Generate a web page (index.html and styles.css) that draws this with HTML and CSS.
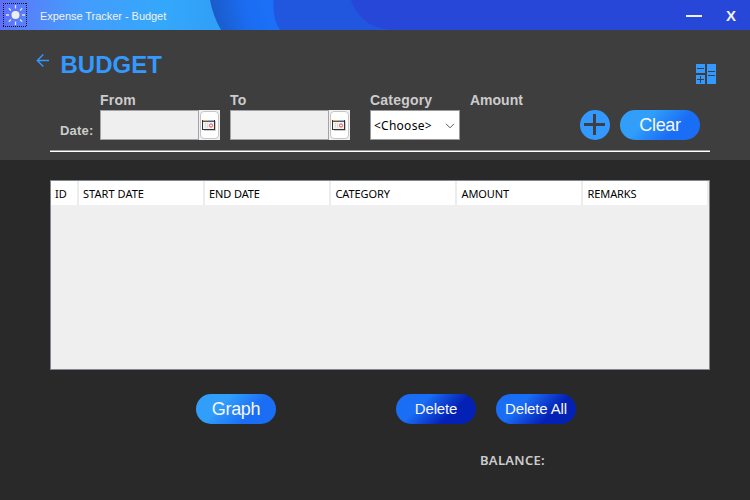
FILE: index.html
```html
<!DOCTYPE html>
<html lang="en">
<head>
<meta charset="utf-8">
<title>Expense Tracker - Budget</title>
<link rel="stylesheet" href="styles.css">
</head>
<body>
<div class="window">
  <header class="titlebar">
    <svg class="titlebar-art" width="750" height="30" viewBox="0 0 750 30" aria-hidden="true">
      <defs>
        <linearGradient id="sky" x1="0" x2="230" y1="0" y2="30" gradientUnits="userSpaceOnUse">
          <stop offset="0" stop-color="#5e6ef8"/><stop offset=".13" stop-color="#5583fa"/><stop offset=".35" stop-color="#449cfc"/><stop offset=".7" stop-color="#34a8fb"/><stop offset="1" stop-color="#2f9df6"/>
        </linearGradient>
        <linearGradient id="wave" x1="212" x2="265" y1="12" y2="0" gradientUnits="userSpaceOnUse">
          <stop offset="0" stop-color="#1a5bc8"/><stop offset=".6" stop-color="#1b6cf0"/><stop offset="1" stop-color="#1b70f7"/>
        </linearGradient>
      </defs>
      <rect width="750" height="30" fill="url(#sky)"/>
      <path d="M210 0Q213 16 221 30H750V0Z" fill="url(#wave)"/>
      <path d="M273.500 0Q272.500 20 280 30H750V0Z" fill="#2156df"/>
      <path d="M351 0Q361 28 392 30H750V0Z" fill="#2747d8"/>
    </svg>
    <svg class="app-icon" width="24" height="24" viewBox="0 0 24 24">
      <path d="M0 .5H24M0 23.500H24M.5 0V24M23.500 0V24" fill="none" stroke="#0c1020" stroke-dasharray="1 1"/>
      <circle cx="12.500" cy="12" r="4" fill="#eee"/>
      <path d="M12.500 2V5.500M12.500 18.500V22M3 12H6M19 12H22M5.800 5.300L8 7.500M17 16.500L19.200 18.700M19.200 5.300L17 7.500M5.800 18.700L8 16.500" stroke="#dfe4f8" stroke-width="1.300"/>
    </svg>
    <span class="app-title">Expense Tracker - Budget</span>
    <span class="minimize"></span>
    <span class="close">X</span>
  </header>

  <section class="top">
    <div class="heading">
      <svg class="back" width="14" height="14" viewBox="0 0 14 14"><path d="M7.300 1.500L1.300 7.500L7.300 13.500M1.300 7.500H13" fill="none" stroke="#3399ff" stroke-width="1.400"/></svg>
      <h1>BUDGET</h1>
      <svg class="calc" width="20" height="20" viewBox="0 0 20 20">
        <path d="M0 0H9V9H0ZM11 0H20V20H11ZM0 11H9V20H0Z" fill="#3399ff"/>
        <path d="M1 4.500H8M12 7.500H19M12 11.500H19M1 15.500H8M4.500 12V19" stroke="#3e3e3e"/>
      </svg>
    </div>
    <div class="filters">
      <span class="label date-label">Date:</span>
      <div class="group date-from">
        <span class="label">From</span>
        <div class="date-field"><span class="date-input"></span><span class="date-button">
          <svg width="14" height="12" viewBox="0 0 14 12"><path d="M2 11.500H13.500V2" fill="none" stroke="#ccc"/><rect x=".5" y="1.500" width="12" height="9" fill="#f2f2f2" stroke="#303338"/><path d="M1 1.500H6" stroke="#e9ae45"/><path d="M6 1.500H12" stroke="#86b2e8"/><path d="M1 2.500H12" stroke="#555b64"/><path d="M3.500 4V9M5.500 4V9" stroke="#ddd"/><circle cx="9" cy="6.500" r="1.600" fill="#fff" stroke="#e84b50"/></svg>
        </span></div>
      </div>
      <div class="group date-to">
        <span class="label">To</span>
        <div class="date-field"><span class="date-input"></span><span class="date-button">
          <svg width="14" height="12" viewBox="0 0 14 12"><path d="M2 11.500H13.500V2" fill="none" stroke="#ccc"/><rect x=".5" y="1.500" width="12" height="9" fill="#f2f2f2" stroke="#303338"/><path d="M1 1.500H6" stroke="#e9ae45"/><path d="M6 1.500H12" stroke="#86b2e8"/><path d="M1 2.500H12" stroke="#555b64"/><path d="M3.500 4V9M5.500 4V9" stroke="#ddd"/><circle cx="9" cy="6.500" r="1.600" fill="#fff" stroke="#e84b50"/></svg>
        </span></div>
      </div>
      <div class="group category">
        <span class="label">Category</span>
        <div class="select"><span>&lt;Choose&gt;</span>
          <svg width="10" height="6" viewBox="0 0 10 6"><path d="M1 .8L5 4.800L9 .8" fill="none" stroke="#555"/></svg>
        </div>
      </div>
      <div class="group amount"><span class="label">Amount</span></div>
      <svg class="add" width="30" height="30" viewBox="0 0 30 30"><circle cx="15" cy="15" r="15" fill="#3399ff"/><path d="M4 14.500H25M14.500 4V25" stroke="#3c3f44" stroke-width="3"/></svg>
      <button class="pill light big clear">Clear</button>
    </div>
    <div class="rule"></div>
  </section>

  <main class="bottom">
    <div class="table">
      <div class="thead">
        <span class="th id">ID</span><span class="th start">START DATE</span><span class="th end">END DATE</span><span class="th cat">CATEGORY</span><span class="th amt">AMOUNT</span><span class="th rem">REMARKS</span>
      </div>
    </div>
    <div class="actions">
      <button class="pill light big graph">Graph</button>
      <button class="pill dark delete">Delete</button>
      <button class="pill dark delete-all">Delete All</button>
    </div>
    <div class="balance">BALANCE:</div>
  </main>
</div>
</body>
</html>
```
FILE: styles.css
```css
* { box-sizing: border-box; }
body { margin: 0; font-family: "Liberation Sans", Arial, sans-serif; }
.window { width: 750px; height: 500px; overflow: hidden; background: #292929; display: flex; flex-direction: column; }
svg { display: block; flex: none; }
span { white-space: nowrap; }

.titlebar { position: relative; height: 30px; display: flex; align-items: center; padding-left: 3px; color: #f2f2f2; }
.titlebar > * { position: relative; }
.titlebar .titlebar-art { position: absolute; left: 0; top: 0; }
.app-title { margin: 2px 0 0 13px; font-size: 11px; line-height: 14px; letter-spacing: -0.04px; }
.minimize { width: 16px; height: 2px; margin: 2px 24px 0 auto; background: #f0f0f0; }
.close { width: 10px; margin: 2px 14px 0 0; font-size: 15px; line-height: 18px; font-weight: bold; }

.top { height: 130px; background: #3e3e3e; }
.heading { height: 61px; display: flex; align-items: flex-start; }
.back { margin: 23px 0 0 36px; }
h1 { margin: 21px 0 0 10.500px; font-size: 24px; line-height: 28px; letter-spacing: 0; color: #3399ff; }
.calc { margin: 34px 34px 0 auto; }
.filters { height: 59px; display: flex; align-items: flex-start; }
.label { display: block; height: 19px; font-size: 14px; line-height: 18px; font-weight: bold; letter-spacing: 0.2px; color: #ccc; }
.amount .label { letter-spacing: 0; }
.date-label { width: 40px; margin: 31px 0 0 60px; font-size: 13px; }
.date-from, .date-to { width: 120px; }
.date-to { margin-left: 10px; }
.date-field { display: flex; height: 30px; background: #f0f0f0; }
.date-input { width: 99px; background: #efefef; border: 1px solid #a5a3aa; }
.date-button { width: 19px; height: 28px; margin: 1px 0 0 1px; border: 1px solid #c5c5c5; border-radius: 4px; background: #fff; display: flex; align-items: center; padding-left: 1px; }
.category { width: 90px; margin-left: 20px; }
.select { height: 30px; display: flex; align-items: center; justify-content: space-between; padding: 0 4px 0 3px; border: 1px solid #999; background: #fff; color: #000; font: 12px/16px "Noto Sans", Tahoma, sans-serif; letter-spacing: 0.25px; }
.select span { margin-top: 1px; }
.select svg { margin-top: 2px; }
.amount { width: 90px; margin-left: 10px; }
.add { margin: 19px 0 0 20px; }
.clear { margin: 19px 0 0 10px; }
.rule { width: 660px; height: 2px; margin-left: 50px; border-top: 1px solid #9a979d; background: #fff; }

.pill { width: 80px; height: 30px; padding: 0; border: 0; border-radius: 15px; color: #f5f8ff; font: 15px/30px "Liberation Sans", Arial, sans-serif; letter-spacing: -0.14px; text-align: center; white-space: nowrap; }
.big { font-size: 18px; letter-spacing: -0.35px; }
.light { background: linear-gradient(135deg, #319ffa 32%, #1a6df5 68%); }
.dark { background: linear-gradient(135deg, #1a6df5 32%, #0421b5 68%); }

.bottom { flex: 1; padding: 20px 40px 0 50px; }
.table { width: 660px; height: 190px; border: 1px solid #828790; background: #efefef; }
.thead { height: 24px; display: flex; background: #fff; color: #000; font: 11px/26px "Noto Sans", Tahoma, sans-serif; letter-spacing: -0.1px; }
.th { flex: none; width: 126px; padding-left: 4px; border-right: 2px solid #ececec; }
.th.id { width: 28px; padding-left: 4px; }
.th.cat, .th.amt, .th.rem { padding-left: 4.500px; }
.th.start { letter-spacing: 0.05px; }
.actions { display: flex; margin: 24px 0 0 146px; }
.delete { margin-left: 120px; }
.delete-all { margin-left: 20px; }
.balance { margin: 27px 0 0 430px; font: 600 13px/18px "Noto Sans", Tahoma, sans-serif; letter-spacing: 0.3px; color: #ccc; }
```
